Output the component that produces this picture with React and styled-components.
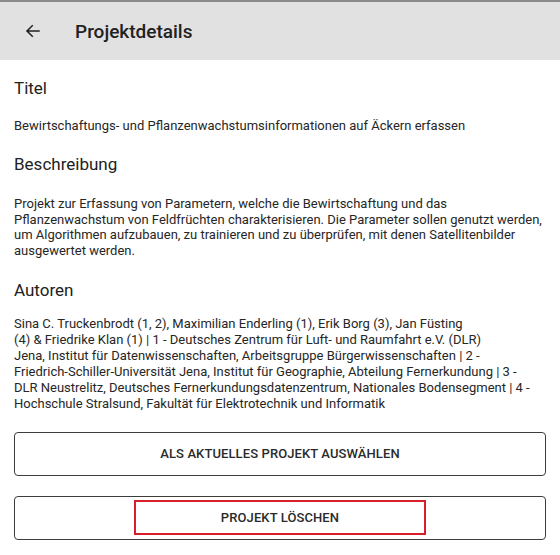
import React from "react";
import styled, { createGlobalStyle } from "styled-components";

const GlobalStyle = createGlobalStyle`
  html, body {
    margin: 0;
    padding: 0;
    background: #ffffff;
  }
  body {
    font-family: Roboto, "Noto Sans", sans-serif;
    color: #212121;
  }
`;

const Screen = styled.div`
  width: 560px;
  height: 555px;
  overflow: hidden;
  display: flex;
  flex-direction: column;
`;

const Toolbar = styled.header`
  height: 58px;
  flex-shrink: 0;
  border-top: 2px solid #8a8a8a;
  background: #e1e1e1;
  display: flex;
  align-items: center;
  padding-left: 24px;
  gap: 33px;
`;

const BackButton = styled.button`
  border: 0;
  background: none;
  padding: 0;
  width: 18px;
  height: 18px;
  display: flex;
  align-items: center;
  justify-content: center;
  color: #212121;
`;

const ToolbarTitle = styled.h1`
  margin: 0;
  font-size: 19px;
  font-weight: 500;
  color: #212121;
`;

const Content = styled.main`
  padding: 0 14px;
  display: flex;
  flex-direction: column;
`;

const SectionTitle = styled.h2`
  margin: ${(p) => p.$top || 18}px 0 0;
  font-size: 17px;
  font-weight: 400;
  line-height: 22px;
`;

const Paragraph = styled.p`
  margin: ${(p) => p.$top || 16}px 0 0;
  font-size: 13px;
  line-height: ${(p) => p.$lh || 16}px;
  color: #262626;
`;

const Actions = styled.div`
  display: flex;
  flex-direction: column;
  gap: 20px;
  margin-top: 20px;
`;

const OutlineButton = styled.button`
  position: relative;
  height: 44px;
  border: 1px solid #3c3c3c;
  border-radius: 4px;
  background: #fff;
  font-family: Roboto, "Noto Sans", sans-serif;
  font-size: 13px;
  font-weight: 500;
  color: #2a2a2a;
  letter-spacing: 0.1px;
  text-transform: uppercase;
`;

const Highlight = styled.span`
  position: absolute;
  left: 119px;
  top: 3px;
  width: 288px;
  height: 31px;
  border: 2px solid #d9202a;
`;

const Arrow = () => (
  <svg width="18" height="18" viewBox="0 0 24 24" fill="none">
    <path
      d="M20 12H4M11 5l-7 7 7 7"
      stroke="currentColor"
      strokeWidth="2"
      strokeLinecap="square"
    />
  </svg>
);

export default function App() {
  return (
    <>
      <GlobalStyle />
      <Screen>
        <Toolbar>
          <BackButton aria-label="Zurück">
            <Arrow />
          </BackButton>
          <ToolbarTitle>Projektdetails</ToolbarTitle>
        </Toolbar>
        <Content>
          <SectionTitle $top={17}>Titel</SectionTitle>
          <Paragraph $top={19}>
            Bewirtschaftungs- und Pflanzenwachstumsinformationen auf Äckern
            erfassen
          </Paragraph>
          <SectionTitle $top={19}>Beschreibung</SectionTitle>
          <Paragraph $top={21} $lh={15.7}>
            Projekt zur Erfassung von Parametern, welche die Bewirtschaftung und
            das
            <br />
            Pflanzenwachstum von Feldfrüchten charakterisieren. Die Parameter
            sollen genutzt werden,
            <br />
            um Algorithmen aufzubauen, zu trainieren und zu überprüfen, mit denen
            Satellitenbilder
            <br />
            ausgewertet werden.
          </Paragraph>
          <SectionTitle $top={20}>Autoren</SectionTitle>
          <Paragraph $top={15}>
            Sina C. Truckenbrodt (1, 2), Maximilian Enderling (1), Erik Borg (3),
            Jan Füsting
            <br />
            (4) &amp; Friedrike Klan (1) | 1 - Deutsches Zentrum für Luft- und
            Raumfahrt e.V. (DLR)
            <br />
            Jena, Institut für Datenwissenschaften, Arbeitsgruppe
            Bürgerwissenschaften | 2 -
            <br />
            Friedrich-Schiller-Universität Jena, Institut für Geographie,
            Abteilung Fernerkundung | 3 -
            <br />
            DLR Neustrelitz, Deutsches Fernerkundungsdatenzentrum, Nationales
            Bodensegment | 4 -
            <br />
            Hochschule Stralsund, Fakultät für Elektrotechnik und Informatik
          </Paragraph>
          <Actions>
            <OutlineButton>Als aktuelles Projekt auswählen</OutlineButton>
            <OutlineButton>
              Projekt löschen
              <Highlight />
            </OutlineButton>
          </Actions>
        </Content>
      </Screen>
    </>
  );
}
